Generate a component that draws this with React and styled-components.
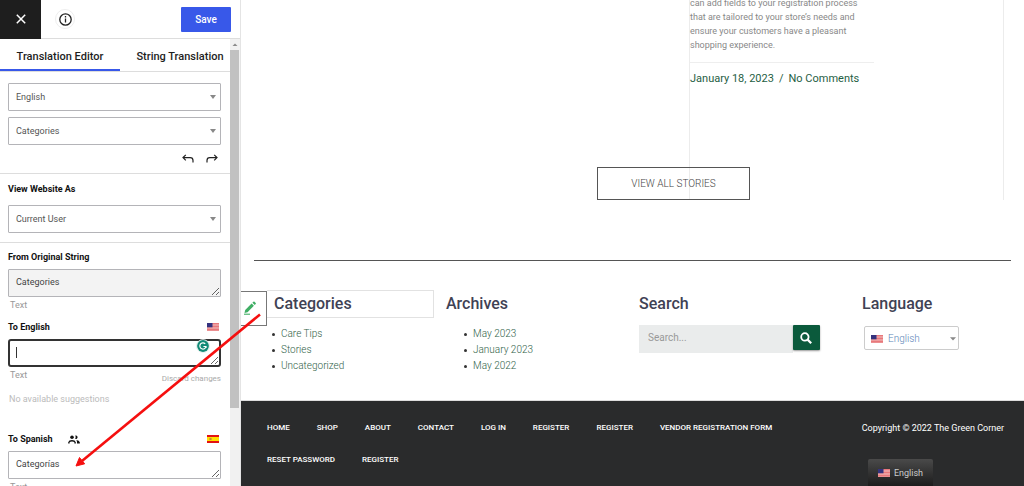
import styled, { createGlobalStyle, css } from "styled-components";

const MENU = [
    "Home",
    "Shop",
    "About",
    "Contact",
    "Log in",
    "Register",
    "Register",
    "Vendor registration form",
    "Reset password",
    "Register",
];

export default function App() {
    return (
        <>
            <GlobalStyle />
            <Layout>
                <Sidebar />
                <Site />
                <Arrow />
            </Layout>
        </>
    );
}

function Sidebar() {
    return (
        <StyledSidebar>
            <TopBar>
                <CloseButton type="button" aria-label="Close">
                    <svg width="10" height="10" viewBox="0 0 10 10">
                        <path d="M.8 .8l8.400 8.400M9.200 .8L.8 9.200" stroke="#fff" strokeWidth="1.500" />
                    </svg>
                </CloseButton>
                <InfoButton type="button" aria-label="Info">
                    <svg width="13" height="13" viewBox="0 0 13 13">
                        <circle cx="6.5" cy="6.5" r="5.7" fill="none" stroke="#222" strokeWidth="1.3" />
                        <path d="M6.5 5.6v4M6.5 3.1v1.4" stroke="#222" strokeWidth="1.3" />
                    </svg>
                </InfoButton>
                <SaveButton type="button">Save</SaveButton>
            </TopBar>
            <Body>
                <Editor>
                    <Tabs>
                        <Tab type="button" $active>Translation Editor</Tab>
                        <Tab type="button">String Translation</Tab>
                    </Tabs>
                    <Section>
                        <Dropdown label="Language" value="English" />
                        <Dropdown label="Group" value="Categories" />
                        <History>
                            <HistoryButton type="button" aria-label="Undo">
                                <TurnIcon />
                            </HistoryButton>
                            <HistoryButton type="button" aria-label="Redo">
                                <TurnIcon flip />
                            </HistoryButton>
                        </History>
                    </Section>
                    <Section $compact>
                        <Label htmlFor="viewAs">View Website As</Label>
                        <Dropdown id="viewAs" value="Current User" />
                    </Section>
                    <Strings>
                        <LabelRow>
                            <Label htmlFor="original">From Original String</Label>
                        </LabelRow>
                        <TextArea id="original" rows={1} defaultValue="Categories" readOnly $filled />
                        <Meta>
                            <span>Text</span>
                        </Meta>
                        <LabelRow>
                            <Label htmlFor="english">To English</Label>
                            <UsFlag />
                        </LabelRow>
                        <FieldWrap>
                            <TextArea id="english" rows={1} $focused />
                            <Caret />
                            <Grammar width="14" height="14" viewBox="0 0 14 14">
                                <circle cx="7" cy="7" r="6.6" fill="#fff" stroke="#d5e6e3" strokeWidth=".6" />
                                <circle cx="7" cy="7" r="5.9" fill="#118a76" />
                                <path
                                    d="M9.2 4.8A3.1 3.1 0 1 0 10 7.5H7.4M10 7.2v1.9"
                                    fill="none"
                                    stroke="#fff"
                                    strokeWidth="1.2"
                                />
                            </Grammar>
                        </FieldWrap>
                        <Meta>
                            <span>Text</span>
                            <DiscardButton type="button">Discard changes</DiscardButton>
                        </Meta>
                        <Suggestions>No available suggestions</Suggestions>
                        <LabelRow>
                            <Label htmlFor="spanish">To Spanish</Label>
                            <PeopleIcon />
                            <EsFlag />
                        </LabelRow>
                        <TextArea id="spanish" rows={1} defaultValue="Categorías" />
                        <Meta>
                            <span>Text</span>
                        </Meta>
                    </Strings>
                </Editor>
                <ScrollTrack>
                    <svg width="10" height="11" viewBox="0 0 10 11">
                        <path d="M2.5 7L5 4.5 7.5 7z" fill="#8a8a8a" />
                    </svg>
                    <ScrollThumb />
                </ScrollTrack>
            </Body>
        </StyledSidebar>
    );
}

function Dropdown({ id, label, value }) {
    return (
        <SelectWrap>
            <Select id={id} aria-label={label} defaultValue={value}>
                <option>{value}</option>
            </Select>
            <SelectArrow />
        </SelectWrap>
    );
}

function Site() {
    return (
        <StyledSite>
            <Stories>
                <Article>
                    <Excerpt>
                        can add fields to your registration process
                        <br />
                        that are tailored to your store’s needs and
                        <br />
                        ensure your customers have a pleasant
                        <br />
                        shopping experience.
                    </Excerpt>
                    <PostMeta>
                        <span>January 18, 2023</span>
                        <span>/</span>
                        <span>No Comments</span>
                    </PostMeta>
                </Article>
                <ViewAll href="#">VIEW ALL STORIES</ViewAll>
            </Stories>
            <Divider />
            <Widgets>
                <Widget>
                    <EditButton type="button" aria-label="Edit text">
                        <svg width="14" height="14" viewBox="0 0 14 14">
                            <path d="M2.2 8.900L8.600 2.500l2.300 2.300-6.400 6.400-3 .7z" fill="#3fae64" />
                            <path d="M9.400 1.800l1-1q.6-.4 1.100 0l1.200 1.200q.4.600 0 1.100l-1 1z" fill="#3fae64" />
                            <path d="M1 13.200h6" stroke="#3fae64" strokeWidth="1.1" />
                        </svg>
                    </EditButton>
                    <Title $selected>Categories</Title>
                    <List>
                        <li><a href="#">Care Tips</a></li>
                        <li><a href="#">Stories</a></li>
                        <li><a href="#">Uncategorized</a></li>
                    </List>
                </Widget>
                <Widget>
                    <Title>Archives</Title>
                    <List $indent>
                        <li><a href="#">May 2023</a></li>
                        <li><a href="#">January 2023</a></li>
                        <li><a href="#">May 2022</a></li>
                    </List>
                </Widget>
                <Widget>
                    <Title>Search</Title>
                    <SearchForm role="search" onSubmit={(event) => event.preventDefault()}>
                        <SearchInput type="search" placeholder="Search..." aria-label="Search" />
                        <SearchButton type="submit" aria-label="Submit search">
                            <svg width="12" height="12" viewBox="0 0 12 12" fill="none" stroke="#fff">
                                <circle cx="4.9" cy="4.9" r="3.7" strokeWidth="1.8" />
                                <path d="M7.6 7.6l3.6 3.6" strokeWidth="2.2" />
                            </svg>
                        </SearchButton>
                    </SearchForm>
                </Widget>
                <Widget>
                    <Title>Language</Title>
                    <LanguageWrap>
                        <UsFlag />
                        <LanguageSelect aria-label="Language" defaultValue="English">
                            <option>English</option>
                        </LanguageSelect>
                        <LanguageChevron width="8" height="6" viewBox="0 0 8 6">
                            <path d="M1 1.200h6L4 4.600z" fill="#888" />
                        </LanguageChevron>
                    </LanguageWrap>
                </Widget>
            </Widgets>
            <Footer>
                <Menu>
                    {MENU.map((item, index) => (
                        <a href="#" key={index}>{item}</a>
                    ))}
                </Menu>
                <Copyright>Copyright © 2022 The Green Corner</Copyright>
                <FloatingLanguage type="button">
                    <UsFlag />
                    English
                </FloatingLanguage>
            </Footer>
        </StyledSite>
    );
}

function TurnIcon({ flip }) {
    return (
        <svg width="12" height="10" viewBox="0 0 12 10" fill="none" stroke="#222" strokeWidth="1.2">
            <g transform={flip ? "translate(12 0) scale(-1 1)" : undefined}>
                <path d="M3.8 .8L1 3.6l2.8 2.8M1 3.6h7.2q2.8 0 2.8 2.8V8.6" />
            </g>
        </svg>
    );
}

function PeopleIcon() {
    return (
        <svg width="12" height="9" viewBox="0 0 12 9">
            <circle cx="4" cy="2.2" r="1.8" fill="#111" />
            <path d="M7.2.5a1.8 1.8 0 1 1 0 3.4q.9-1.7 0-3.4z" fill="#111" />
            <path d="M.2 8.4V7.2Q.8 5.1 4 5.1t3.8 2.1v1.2H6.4V7.3Q5.8 6.4 4 6.4t-2.4.9v1.1z" fill="#111" />
            <path d="M8.3 5.1q3 .4 3.5 2.1v1.2H9V7Q9 6 8.3 5.1z" fill="#111" />
        </svg>
    );
}

function UsFlag() {
    return (
        <Flag width="12" height="8" viewBox="0 0 12 8">
            <path d="M0 0h12v8H0z" fill="#f3c4c4" />
            <path d="M0 .5h12M0 2h12M0 3.5h12M0 5h12M0 6.5h12M0 7.8h12" stroke="#e46468" strokeWidth=".8" />
            <path d="M0 0h5.5v4.3H0z" fill="#34327e" />
        </Flag>
    );
}

function EsFlag() {
    return (
        <Flag width="12" height="8" viewBox="0 0 12 8">
            <path d="M0 0h12v8H0z" fill="#e31212" />
            <path d="M0 2h12v4H0z" fill="#ffe000" />
            <path d="M2.4 2.9h2.2v2.2H2.4z" fill="#c88a2a" />
        </Flag>
    );
}

function Arrow() {
    return (
        <ArrowSvg width="262" height="472" viewBox="0 0 262 472">
            <path d="M260 314.500L82 461" stroke="#f50f0f" strokeWidth="2.6" />
            <path d="M76 466l3.500-8.500 5.200 6.300z" fill="#f50f0f" stroke="#f50f0f" />
        </ArrowSvg>
    );
}

const GlobalStyle = createGlobalStyle`
    * {
        box-sizing: border-box;
    }

    body {
        margin: 0;
        font-family: Roboto, "Liberation Sans", sans-serif;
        background-color: #fff;
    }

    button, input, select, textarea {
        font-family: inherit;
        margin: 0;
    }

    a {
        color: inherit;
        text-decoration: none;
    }

    svg {
        display: block;
        flex-shrink: 0;
    }
`;

const Layout = styled.div`
    position: relative;
    display: flex;
    height: 100vh;
    overflow: hidden;
`;

const StyledSidebar = styled.aside`
    display: flex;
    flex-direction: column;
    flex: 0 0 241px;
    min-width: 0;
    border-right: 1px solid #e4e4e4;
`;

const TopBar = styled.header`
    display: flex;
    align-items: center;
    flex-shrink: 0;
    height: 39px;
    padding-right: 9px;
    border-bottom: 1px solid #ddd;
`;

const iconButton = css`
    display: flex;
    align-items: center;
    justify-content: center;
    padding: 0;
    border: none;
    background: none;
`;

const CloseButton = styled.button`
    ${iconButton}
    width: 41px;
    height: 39px;
    background-color: #1e1e1e;
`;

const InfoButton = styled.button`
    ${iconButton}
    width: 20px;
    height: 20px;
    margin-left: 14px;
    border: 1px solid #eee;
    border-radius: 50%;
`;

const SaveButton = styled.button`
    width: 50px;
    height: 25px;
    margin-left: auto;
    padding: 0;
    border: none;
    border-radius: 1px;
    background-color: #3858e9;
    color: #fff;
    font-size: 10px;
    font-weight: 500;
`;

const Body = styled.div`
    display: flex;
    flex: 1;
    min-height: 0;
`;

const Editor = styled.div`
    flex: 1;
    min-width: 0;
    overflow: hidden;
`;

const ScrollTrack = styled.div`
    display: flex;
    flex-direction: column;
    flex-shrink: 0;
    width: 10px;
    background-color: #f1f1f1;
`;

const ScrollThumb = styled.div`
    height: 80%;
    margin-right: 1px;
    background-color: #c1c1c1;
`;

const Tabs = styled.div`
    display: flex;
    height: 33px;
    border-bottom: 1px solid #ddd;
`;

const Tab = styled.button`
    flex: 0 0 120px;
    padding: 4px 0 0;
    border: none;
    border-bottom: 2px solid ${({ $active }) => ($active ? "#3858e9" : "transparent")};
    background: none;
    color: #1e1e1e;
    font-size: 11px;
    font-weight: 500;
    white-space: nowrap;
`;

const Section = styled.div`
    display: flex;
    flex-direction: column;
    gap: ${({ $compact }) => ($compact ? "8px" : "6px")};
    padding: ${({ $compact }) => ($compact ? "8px 9px 9px 8px" : "11px 9px 8px 8px")};
    border-bottom: 1px solid #ddd;
`;

const SelectWrap = styled.div`
    position: relative;
`;

const Select = styled.select`
    display: block;
    appearance: none;
    width: 100%;
    height: 28px;
    padding: 0 7px;
    border: 1px solid #b4b4b8;
    border-radius: 1px;
    background-color: #fff;
    color: #555;
    font-size: 9px;
`;

const SelectArrow = styled.span`
    position: absolute;
    top: 12px;
    right: 5px;
    border: solid transparent;
    border-width: 4px 3px 0;
    border-top-color: #888;
    pointer-events: none;
`;

const History = styled.div`
    display: flex;
    justify-content: flex-end;
    gap: 12px;
    padding: 2px 3px 0;
`;

const HistoryButton = styled.button`
    ${iconButton}
    height: 12px;
`;

const Strings = styled.div`
    padding: 4px 9px 0 8px;
`;

const LabelRow = styled.div`
    display: flex;
    align-items: center;
    gap: 15px;
    height: 20px;
    padding-right: 2px;
    margin-bottom: 2px;
`;

const Label = styled.label`
    color: #111;
    font-size: 9px;
    font-weight: 700;
    line-height: 15px;
`;

const Flag = styled.svg`
    margin-left: auto;
`;

const FieldWrap = styled.div`
    position: relative;
`;

const TextArea = styled.textarea`
    display: block;
    width: 100%;
    height: 28px;
    padding: 7px;
    border: 1px solid #b4b4b8;
    border-radius: 1px;
    outline: none;
    overflow: hidden;
    resize: vertical;
    background-color: ${({ $filled }) => ($filled ? "#f3f3f3" : "#fff")};
    color: #444;
    font-size: 9px;
    line-height: 11px;

    ${({ $focused }) => $focused && css`
        border: 2px solid #333;
        border-radius: 3px;
    `}
`;

const Caret = styled.span`
    position: absolute;
    top: 8px;
    left: 8px;
    width: 1px;
    height: 11px;
    background-color: #333;
`;

const Grammar = styled.svg`
    position: absolute;
    top: 0;
    right: 11px;
`;

const Meta = styled.div`
    display: flex;
    align-items: flex-start;
    justify-content: space-between;
    height: 20px;
    padding-left: 2px;
    color: #999;
    font-size: 9px;
    line-height: 17px;
`;

const DiscardButton = styled.button`
    padding: 3px 0 0;
    border: none;
    background: none;
    color: #aaa;
    font-size: 8px;
    line-height: 17px;
`;

const Suggestions = styled.p`
    margin: 6px 0 23px 1px;
    color: #bbb;
    font-size: 9px;
    line-height: 13px;
`;

const StyledSite = styled.main`
    display: flex;
    flex-direction: column;
    flex: 1;
    min-width: 0;
`;

const Stories = styled.section`
    display: grid;
    grid-template-columns: 448fr 315fr 20fr;
    height: 200px;
`;

const Article = styled.article`
    grid-area: 1 / 2;
    border: solid #ececec;
    border-width: 0 1px;
`;

const Excerpt = styled.p`
    width: 184px;
    margin: -4px 0 0;
    padding-bottom: 10px;
    border-bottom: 1px solid #eee;
    color: #888;
    font-size: 9px;
    line-height: 14px;
    white-space: nowrap;
`;

const PostMeta = styled.p`
    display: flex;
    gap: 5px;
    margin: 9px 0 0;
    color: #1f6044;
    font-size: 11px;
    line-height: 14px;
`;

const ViewAll = styled.a`
    grid-area: 1 / 1 / 2 / -1;
    align-self: end;
    justify-self: center;
    margin-left: 82px;
    padding: 0 33px;
    border: 1px solid #555;
    color: #444;
    font-size: 10px;
    font-weight: 300;
    line-height: 31px;
`;

const Divider = styled.hr`
    width: calc(100% - 26px);
    margin: 60px 13px 0;
    border: none;
    border-top: 1px solid #555;
`;

const Widgets = styled.section`
    display: grid;
    grid-template-columns: 179fr 193fr 223fr 149fr;
    padding: 29px 13px 0 26px;
`;

const Widget = styled.div`
    position: relative;
    height: 110px;
`;

const EditButton = styled.button`
    ${iconButton}
    position: absolute;
    top: 1px;
    right: 100%;
    width: 26px;
    height: 35px;
    padding: 0 8px 2px 0;
    border: 1px solid #777;
    border-left: none;
    background-color: #fff;
`;

const Title = styled.h2`
    margin: 0 0 8px;
    border: 1px solid transparent;
    border-left: none;
    color: #3f4254;
    font-size: 16px;
    font-weight: 500;
    line-height: 26px;

    ${({ $selected }) => $selected && css`
        margin-right: 12px;
        padding-left: 7px;
        border-color: #e2e2e2;
    `}
`;

const List = styled.ul`
    margin: 0;
    padding-left: ${({ $indent }) => ($indent ? "18px" : "5px")};
    list-style: none;
    font-size: 10px;
    font-weight: 300;
    line-height: 16px;

    li {
        display: flex;
        align-items: center;
        gap: 6px;
    }

    li::before {
        content: "";
        width: 3px;
        height: 3px;
        border-radius: 50%;
        background-color: #333;
    }

    a {
        color: #2f6148;
    }
`;

const SearchForm = styled.form`
    display: flex;
    align-items: flex-start;
    width: 81%;
    margin-top: -1px;
`;

const SearchInput = styled.input`
    flex: 1;
    min-width: 0;
    height: 28px;
    padding: 0 9px 3px;
    border: none;
    background-color: #eaecec;
    font-size: 10px;

    &::placeholder {
        color: #999;
    }
`;

const SearchButton = styled.button`
    ${iconButton}
    width: 27px;
    height: 25px;
    border-radius: 1px;
    background-color: #0b5a3c;
    box-shadow: 0 1px 2px #999;
`;

const LanguageWrap = styled.div`
    position: relative;
    width: 95px;
    margin-left: 2px;

    ${Flag} {
        position: absolute;
        top: 9px;
        left: 7px;
    }
`;

const LanguageSelect = styled.select`
    display: block;
    appearance: none;
    width: 100%;
    height: 24px;
    padding: 0 20px 0 23px;
    border: 1px solid #ccc;
    border-radius: 2px;
    background-color: transparent;
    color: #5b85b8;
    font-size: 10px;
    font-weight: 300;
`;

const LanguageChevron = styled.svg`
    position: absolute;
    top: 10px;
    right: 2px;
    pointer-events: none;
`;

const Footer = styled.footer`
    position: relative;
    display: flex;
    justify-content: space-between;
    flex: 1;
    padding: 11px 20px 0 26px;
    border-top: 1px solid #ddd;
    background-color: #2a2b2c;
    color: #fff;
`;

const Menu = styled.nav`
    display: flex;
    flex-wrap: wrap;
    align-content: flex-start;
    column-gap: 27px;
    flex: 1;
    font-size: 8px;
    font-weight: 500;
    line-height: 32px;
    text-transform: uppercase;
`;

const Copyright = styled.p`
    margin: 0;
    font-size: 9px;
    line-height: 32px;
    white-space: nowrap;
`;

const FloatingLanguage = styled.button`
    position: absolute;
    right: 91px;
    bottom: 0;
    display: flex;
    align-items: center;
    gap: 4px;
    height: 27px;
    padding: 0 10px;
    border: none;
    border-radius: 2px 2px 0 0;
    background: linear-gradient(#4a4a4a, #1c1c1c);
    color: #ccc;
    font-size: 9px;
`;

const ArrowSvg = styled.svg`
    position: absolute;
    top: 0;
    left: 0;
    pointer-events: none;
`;
